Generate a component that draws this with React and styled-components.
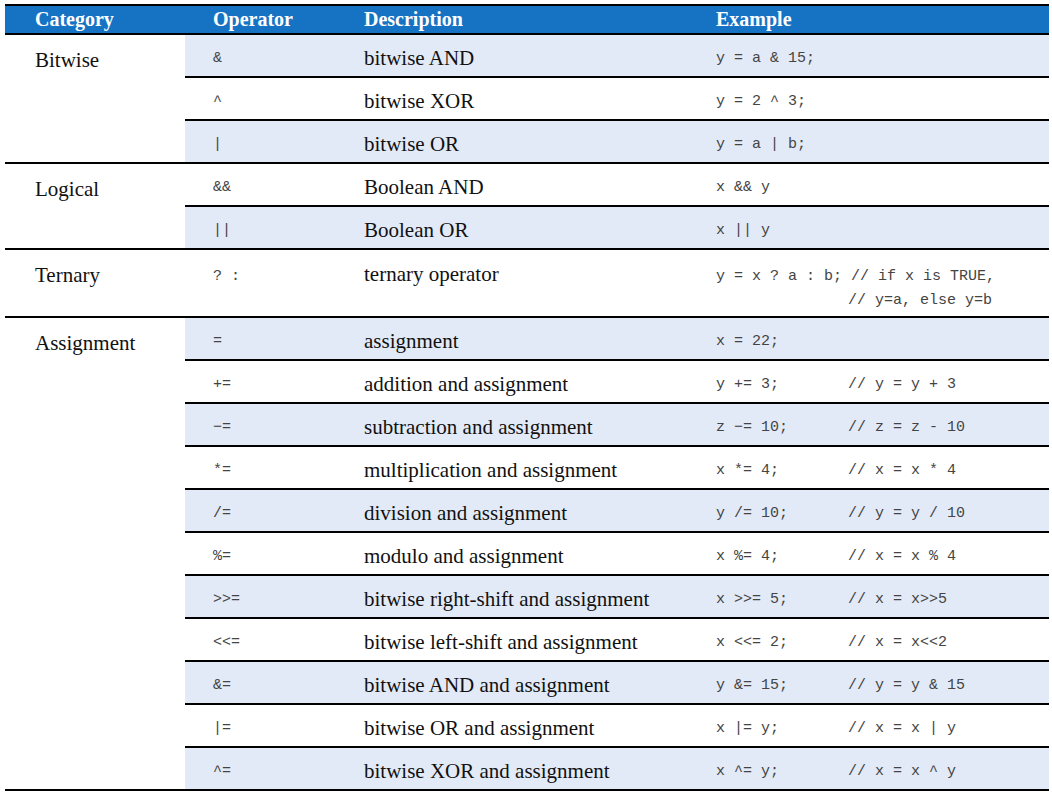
import styled, { createGlobalStyle } from "styled-components"

const groups = [
  {
    name: "Bitwise",
    rows: [
      { op: "&", desc: "bitwise AND", code: "y = a & 15;", shade: true },
      { op: "^", desc: "bitwise XOR", code: "y = 2 ^ 3;" },
      { op: "|", desc: "bitwise OR", code: "y = a | b;", shade: true },
    ],
  },
  {
    name: "Logical",
    rows: [
      { op: "&&", desc: "Boolean AND", code: "x && y" },
      { op: "||", desc: "Boolean OR", code: "x || y", shade: true },
    ],
  },
  {
    name: "Ternary",
    rows: [
      {
        op: "? :",
        desc: "ternary operator",
        code: "y = x ? a : b; // if x is TRUE,",
        more: "// y=a, else y=b",
        tall: true,
      },
    ],
  },
  {
    name: "Assignment",
    rows: [
      { op: "=", desc: "assignment", code: "x = 22;", shade: true },
      { op: "+=", desc: "addition and assignment", code: "y += 3;", note: "// y = y + 3" },
      { op: "−=", desc: "subtraction and assignment", code: "z −= 10;", note: "// z = z - 10", shade: true },
      { op: "*=", desc: "multiplication and assignment", code: "x *= 4;", note: "// x = x * 4" },
      { op: "/=", desc: "division and assignment", code: "y /= 10;", note: "// y = y / 10", shade: true },
      { op: "%=", desc: "modulo and assignment", code: "x %= 4;", note: "// x = x % 4" },
      { op: ">>=", desc: "bitwise right-shift and assignment", code: "x >>= 5;", note: "// x = x>>5", shade: true },
      { op: "<<=", desc: "bitwise left-shift and assignment", code: "x <<= 2;", note: "// x = x<<2" },
      { op: "&=", desc: "bitwise AND and assignment", code: "y &= 15;", note: "// y = y & 15", shade: true },
      { op: "|=", desc: "bitwise OR and assignment", code: "x |= y;", note: "// x = x | y" },
      { op: "^=", desc: "bitwise XOR and assignment", code: "x ^= y;", note: "// x = x ^ y", shade: true },
    ],
  },
]

export default function App() {
  return (
    <>
      <GlobalStyle />
      <Table>
        <Header>
          <HeadCell>Category</HeadCell>
          <HeadCell>Operator</HeadCell>
          <HeadCell>Description</HeadCell>
          <HeadCell>Example</HeadCell>
        </Header>

        {groups.map((g) => (
          <Group key={g.name}>
            <Category>{g.name}</Category>
            <Rows>
              {g.rows.map((r) => (
                <Row key={r.op} $shade={r.shade} $tall={r.tall}>
                  <Op>{r.op}</Op>
                  <Desc>{r.desc}</Desc>
                  <Example>
                    <CodeLine>
                      <Code $fixed={!!r.note}>{r.code}</Code>
                      {r.note && <Code>{r.note}</Code>}
                    </CodeLine>
                    {r.more && (
                      <CodeLine>
                        <Code $fixed />
                        <Code>{r.more}</Code>
                      </CodeLine>
                    )}
                  </Example>
                </Row>
              ))}
            </Rows>
          </Group>
        ))}
      </Table>
    </>
  )
}

const GlobalStyle = createGlobalStyle`
    body {
        margin: 0;
        background: #ffffff;
    }
`
const Table = styled.div`
    width: 1044px;
    margin: 4px 0 0 5px;
    border-top: 2px solid #000;
    font-family: 'Liberation Serif', 'Times New Roman', serif;
    color: #111;
`
const Header = styled.div`
    display: grid;
    grid-template-columns: 180px 179px 352px 1fr;
    height: 27px;
    align-items: center;
    background-color: #1673c4;
    border-bottom: 2px solid #000;
`
const HeadCell = styled.div`
    color: #fff;
    font-size: 20px;
    font-weight: 700;
    padding-left: 30px;
    &:nth-child(2) { padding-left: 28px; }
    &:nth-child(3), &:nth-child(4) { padding-left: 0; }
`
const Group = styled.div`
    display: flex;
    border-bottom: 2px solid #000;
`
const Category = styled.div`
    width: 180px;
    flex-shrink: 0;
    padding: 13px 0 0 30px;
    box-sizing: border-box;
    font-size: 21px;
    line-height: 24px;
`
const Rows = styled.div`
    flex: 1;
    display: flex;
    flex-direction: column;
`
const Row = styled.div`
    display: grid;
    grid-template-columns: 179px 352px 1fr;
    align-items: ${(p) => (p.$tall ? "start" : "center")};
    height: ${(p) => (p.$tall ? "54px" : "37px")};
    padding-top: ${(p) => (p.$tall ? "12px" : "4px")};
    background-color: ${(p) => (p.$shade ? "#e3eaf7" : "#fff")};
    border-bottom: 2px solid #000;
    &:last-child { border-bottom: none; }
`
const Op = styled.div`
    padding: 3px 0 0 28px;
    font-family: 'Liberation Mono', 'Courier New', monospace;
    font-size: 15px;
    line-height: 24px;
    color: #444;
`
const Desc = styled.div`
    font-size: 21px;
    line-height: 24px;
`
const Example = styled.div`
    display: flex;
    flex-direction: column;
    padding-top: 3px;
`
const CodeLine = styled.div`
    display: flex;
    line-height: 24px;
`
const Code = styled.span`
    font-family: 'Liberation Mono', 'Courier New', monospace;
    font-size: 15px;
    color: #444;
    white-space: pre;
    ${(p) => p.$fixed && "width: 132px;"}
`
